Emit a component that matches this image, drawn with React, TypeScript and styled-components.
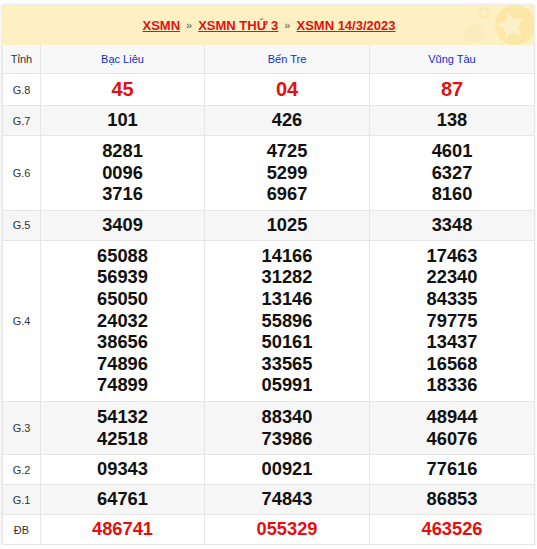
import React from "react";
import styled, { createGlobalStyle } from "styled-components";

const Global = createGlobalStyle`
  html, body { margin: 0; padding: 0; background: #ffffff; }
  body { font-family: "Liberation Sans", Arial, sans-serif; }
`;

const Wrap = styled.div`
  width: 532px;
  margin: 5px 0 0 2px;
  background: #fff;
  box-shadow: 0 0 3px rgba(0, 0, 0, 0.18);
`;

const Banner = styled.div`
  position: relative;
  height: 40px;
  background: #fdf1c4;
  display: flex;
  align-items: center;
  justify-content: center;
  overflow: hidden;
`;

const Crumbs = styled.div`
  position: relative;
  z-index: 1;
  display: flex;
  align-items: center;
  gap: 6px;
  font-size: 13px;
  font-weight: bold;
  margin-left: 2px;
`;

const Crumb = styled.a`
  color: #e3100f;
  text-decoration: underline;
`;

const Sep = styled.span`
  color: #555;
  font-weight: normal;
  font-size: 11px;
`;

const Deco = styled.svg`
  position: absolute;
  right: 0;
  top: 0;
`;

const Table = styled.table`
  width: 532px;
  border-collapse: collapse;
  table-layout: fixed;
`;

const HeadCell = styled.th<{ $label?: boolean }>`
  height: 28px;
  padding: 0;
  font-size: 11px;
  font-weight: normal;
  text-align: center;
  color: ${(p) => (p.$label ? "#333" : "#0b2ecf")};
  background: #f8f8f8;
  border: 1px solid #e6e6e6;
  border-top: none;
`;

const Row = styled.tr<{ $alt?: boolean }>`
  background: ${(p) => (p.$alt ? "#f6f6f6" : "#ffffff")};
`;

const Label = styled.td`
  padding: 0;
  font-size: 11px;
  color: #333;
  text-align: center;
  vertical-align: middle;
  border: 1px solid #e6e6e6;
`;

const NumCell = styled.td`
  padding: 4px 0 5px;
  text-align: center;
  vertical-align: middle;
  border: 1px solid #e6e6e6;
`;

const Num = styled.div<{ $kind: "multi" | "single" | "g8" | "db" }>`
  font-weight: bold;
  font-size: ${(p) => (p.$kind === "g8" ? "20px" : "18.3px")};
  line-height: ${(p) =>
    p.$kind === "multi" ? "21.6px" : p.$kind === "g8" ? "22px" : p.$kind === "db" ? "20px" : "20px"};
  color: ${(p) => (p.$kind === "g8" || p.$kind === "db" ? "#e3100f" : "#111")};
`;

type Prize = { label: string; kind?: "g8" | "db"; values: string[][] };

const provinces = ["Bạc Liêu", "Bến Tre", "Vũng Tàu"];

const prizes: Prize[] = [
  { label: "G.8", kind: "g8", values: [["45"], ["04"], ["87"]] },
  { label: "G.7", values: [["101"], ["426"], ["138"]] },
  {
    label: "G.6",
    values: [
      ["8281", "0096", "3716"],
      ["4725", "5299", "6967"],
      ["4601", "6327", "8160"],
    ],
  },
  { label: "G.5", values: [["3409"], ["1025"], ["3348"]] },
  {
    label: "G.4",
    values: [
      ["65088", "56939", "65050", "24032", "38656", "74896", "74899"],
      ["14166", "31282", "13146", "55896", "50161", "33565", "05991"],
      ["17463", "22340", "84335", "79775", "13437", "16568", "18336"],
    ],
  },
  {
    label: "G.3",
    values: [
      ["54132", "42518"],
      ["88340", "73986"],
      ["48944", "46076"],
    ],
  },
  { label: "G.2", values: [["09343"], ["00921"], ["77616"]] },
  { label: "G.1", values: [["64761"], ["74843"], ["86853"]] },
  { label: "ĐB", kind: "db", values: [["486741"], ["055329"], ["463526"]] },
];

function Decoration() {
  const star = (cx: number, cy: number, r: number) => {
    const pts: string[] = [];
    for (let i = 0; i < 10; i++) {
      const a = -Math.PI / 2 + (i * Math.PI) / 5;
      const rr = i % 2 === 0 ? r : r * 0.45;
      pts.push(`${(cx + rr * Math.cos(a)).toFixed(1)},${(cy + rr * Math.sin(a)).toFixed(1)}`);
    }
    return pts.join(" ");
  };
  return (
    <Deco width="100" height="40" viewBox="0 0 100 40">
      <circle cx="81" cy="20" r="20" fill="#fde7a6" />
      <polygon points={star(77, 21, 15)} fill="#fdf0c8" transform="rotate(-12 77 21)" />
      <circle cx="50" cy="8" r="6" fill="#fce8b4" />
      <polygon points={star(50, 8, 4)} fill="#fdf1ca" />
      <circle cx="40" cy="28" r="10" fill="#fcebbd" />
    </Deco>
  );
}

export default function App() {
  return (
    <>
      <Global />
      <Wrap>
        <Banner>
          <Crumbs>
            <Crumb>XSMN</Crumb>
            <Sep>»</Sep>
            <Crumb>XSMN THỨ 3</Crumb>
            <Sep>»</Sep>
            <Crumb>XSMN 14/3/2023</Crumb>
          </Crumbs>
          <Decoration />
        </Banner>
        <Table>
          <colgroup>
            <col style={{ width: 38 }} />
            <col style={{ width: 164 }} />
            <col style={{ width: 165 }} />
            <col style={{ width: 165 }} />
          </colgroup>
          <thead>
            <tr>
              <HeadCell $label>Tỉnh</HeadCell>
              {provinces.map((p) => (
                <HeadCell key={p}>{p}</HeadCell>
              ))}
            </tr>
          </thead>
          <tbody>
            {prizes.map((pr, i) => (
              <Row key={pr.label} $alt={i % 2 === 1}>
                <Label>{pr.label}</Label>
                {pr.values.map((vals, j) => (
                  <NumCell key={j}>
                    {vals.map((v, k) => (
                      <Num
                        key={k}
                        $kind={pr.kind ? pr.kind : vals.length > 1 ? "multi" : "single"}
                      >
                        {v}
                      </Num>
                    ))}
                  </NumCell>
                ))}
              </Row>
            ))}
          </tbody>
        </Table>
      </Wrap>
    </>
  );
}
